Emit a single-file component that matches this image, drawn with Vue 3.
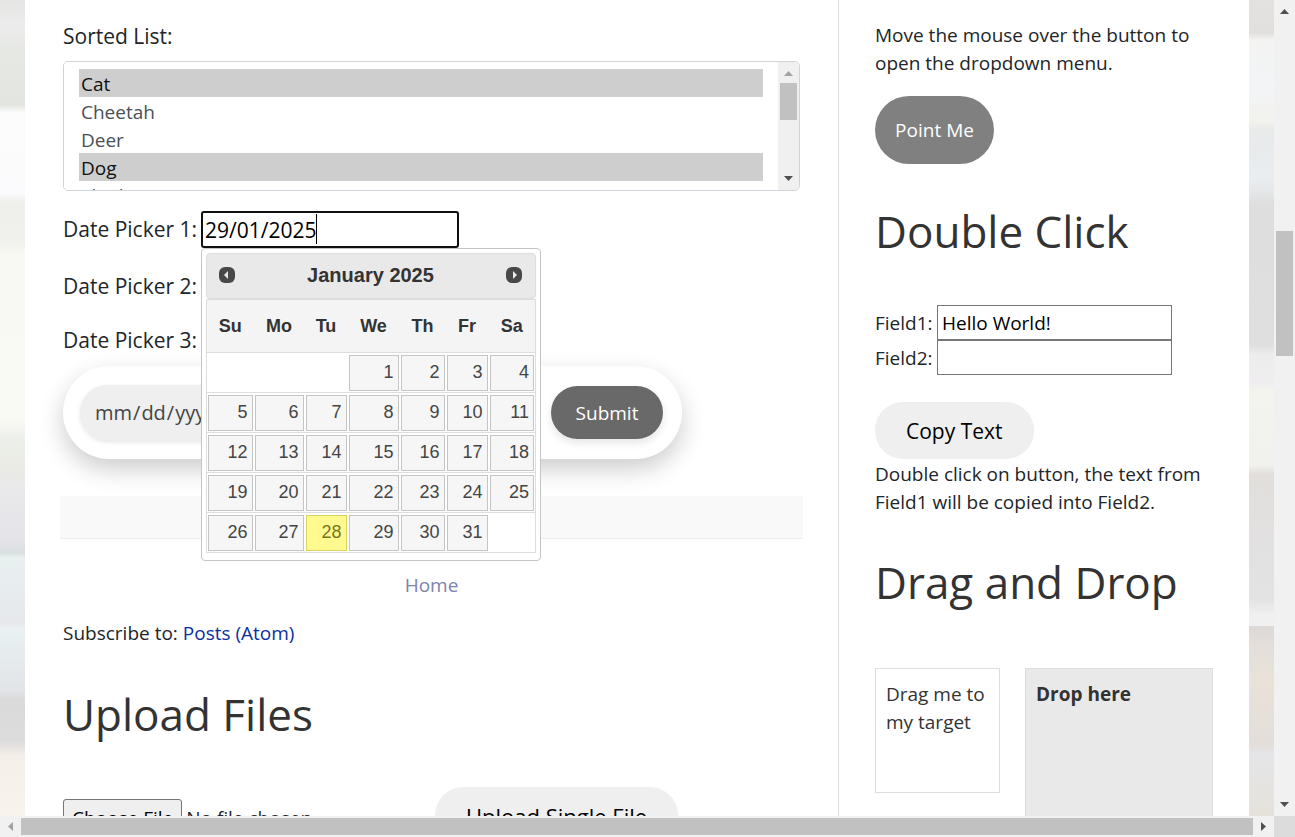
<script setup>
import { ref } from 'vue'

const animals = ['Cat', 'Cheetah', 'Deer', 'Dog', 'Elephant', 'Fox', 'Giraffe', 'Lion', 'Rabbit', 'Zebra']
const picked = ref(['Cat', 'Dog'])
const date1 = ref('29/01/2025')
const date2 = ref('')
const field1 = ref('Hello World!')
const field2 = ref('')

const weekdays = ['Su', 'Mo', 'Tu', 'We', 'Th', 'Fr', 'Sa']
const firstWeekday = 3
const daysInMonth = 31
const today = 28
const weeks = Array.from({ length: 5 }, (_, w) =>
  Array.from({ length: 7 }, (_, d) => {
    const day = w * 7 + d - firstWeekday + 1
    return day > 0 && day <= daysInMonth ? day : null
  })
)
</script>

<template>
  <div class="window">
    <div class="viewport">
      <div class="strip strip-left"></div>
      <div class="page">
        <main class="main">
          <label class="list-label" for="animals">Sorted List:</label>
          <div class="list-box">
            <select id="animals" v-model="picked" class="list" multiple>
              <option v-for="a in animals" :key="a" :value="a">{{ a }}</option>
            </select>
            <div class="list-bar">
              <svg width="9" height="5" viewBox="0 0 9 5"><path d="M0 5 4.500 0 9 5z" fill="#a3a3a3" /></svg>
              <span class="list-thumb"></span>
              <svg width="9" height="5" viewBox="0 0 9 5"><path d="M0 0 4.500 5 9 0z" fill="#505050" /></svg>
            </div>
          </div>

          <div class="date-row">
            <label for="d1">Date Picker 1:</label>
            <div class="date-wrap">
              <input id="d1" v-model="date1" class="date-input" type="text" />
              <span class="caret-line"><span class="caret-text">{{ date1 }}</span></span>
              <section class="calendar">
                <header class="cal-head">
                  <button class="cal-nav" type="button" aria-label="Prev">
                    <svg width="16" height="16" viewBox="0 0 16 16">
                      <rect width="16" height="16" rx="6" fill="#484848" />
                      <path d="M9 4v8L5 8z" fill="#e9e9e9" />
                    </svg>
                  </button>
                  <span class="cal-title">January 2025</span>
                  <button class="cal-nav" type="button" aria-label="Next">
                    <svg width="16" height="16" viewBox="0 0 16 16">
                      <rect width="16" height="16" rx="6" fill="#484848" />
                      <path d="M7 4v8l4-4z" fill="#e9e9e9" />
                    </svg>
                  </button>
                </header>
                <table class="cal-table">
                  <thead>
                    <tr>
                      <th v-for="d in weekdays" :key="d" scope="col">{{ d }}</th>
                    </tr>
                  </thead>
                  <tbody>
                    <tr v-for="(week, w) in weeks" :key="w">
                      <td v-for="(day, i) in week" :key="i">
                        <a v-if="day" href="#" :class="{ today: day === today }">{{ day }}</a>
                      </td>
                    </tr>
                  </tbody>
                </table>
              </section>
            </div>
          </div>
          <div class="date-row second">
            <label for="d2">Date Picker 2:</label>
            <input id="d2" v-model="date2" class="date-plain" type="text" />
          </div>
          <p class="date-row third">Date Picker 3:</p>

          <form class="range" @submit.prevent>
            <input class="range-input" type="date" aria-label="Start date" />
            <input class="range-input" type="date" aria-label="End date" />
            <button class="range-submit" type="submit">Submit</button>
          </form>

          <div class="band"></div>
          <a class="home" href="#">Home</a>
          <p class="subscribe">Subscribe to: <a href="#">Posts (Atom)</a></p>

          <h2 class="heading upload-heading">Upload Files</h2>
          <div class="upload-row">
            <input class="file" type="file" aria-label="Single file" />
            <button class="soft-button upload" type="button">Upload Single File</button>
          </div>
        </main>

        <aside class="side">
          <p>Move the mouse over the button to open the dropdown menu.</p>
          <button class="point" type="button">Point Me</button>

          <h2 class="heading double-heading">Double Click</h2>
          <div class="field">
            <label for="f1">Field1:</label>
            <input id="f1" v-model="field1" type="text" />
          </div>
          <div class="field">
            <label for="f2">Field2:</label>
            <input id="f2" v-model="field2" type="text" />
          </div>
          <button class="soft-button copy" type="button" @dblclick="field2 = field1">Copy Text</button>
          <p>Double click on button, the text from Field1 will be copied into Field2.</p>

          <h2 class="heading drag-heading">Drag and Drop</h2>
          <div class="drag-row">
            <div class="drag">Drag me to my target</div>
            <div class="drop">Drop here</div>
          </div>
        </aside>
      </div>
      <div class="strip strip-right"></div>
    </div>

    <div class="vbar">
      <svg width="9" height="5" viewBox="0 0 9 5"><path d="M0 5 4.500 0 9 5z" fill="#505050" /></svg>
      <span class="vtrack"><span class="vthumb"></span></span>
      <svg width="9" height="5" viewBox="0 0 9 5"><path d="M0 0 4.500 5 9 0z" fill="#505050" /></svg>
    </div>
    <div class="hbar">
      <svg width="5" height="9" viewBox="0 0 5 9"><path d="M5 0 0 4.500 5 9z" fill="#a3a3a3" /></svg>
      <span class="hthumb"></span>
      <svg width="5" height="9" viewBox="0 0 5 9"><path d="M0 0 5 4.500 0 9z" fill="#505050" /></svg>
    </div>
    <div class="corner"></div>
  </div>
</template>

<style>
body {
  margin: 0;
  overflow: hidden;
}
</style>

<style scoped>
* {
  box-sizing: border-box;
}
.window {
  display: grid;
  grid-template: minmax(0, 1fr) 21px / minmax(0, 1fr) 21px;
  height: 100vh;
  font-family: "Open Sans", "Noto Sans", sans-serif;
  font-size: 19px;
  line-height: 28px;
  color: #212529;
}
p,
h2 {
  margin: 0;
}
a {
  text-decoration: none;
}
button,
input,
select {
  font-family: inherit;
  margin: 0;
}
.viewport {
  display: flex;
  overflow: hidden;
  background: #fff;
}
.strip {
  flex: 0 0 25px;
}
.strip-left {
  background: linear-gradient(#e5e5e4 0, #ececec 25px, #e6e8e4 50px, #e3e6e0 105px, #fcfcfc 113px, #fbfbfd 193px, #efefeb 202px, #f0f0ec 240px, #f8f9f2 255px, #fafaf5 420px, #edefea 438px, #e9ebe4 468px, #e9e9ec 490px, #e4e4e8 540px, #d9dfdf 553px, #e9f0f0 558px, #e6e8ec 624px, #e9f1f2 628px, #e2e4e8 690px, #dadadb 700px, #dcdcdc 740px, #f4efe9 757px, #f8f4ed 816px);
}
.strip-right {
  background: linear-gradient(#e4e2e0 0, #e2e0de 33px, #f3f3f2 40px, #f2f4f6 90px, #f2f2ed 122px, #e8eaea 130px, #e9edf0 180px, #dedede 205px, #dfdfdf 345px, #ededee 355px, #efedef 382px, #f4f4ef 390px, #f1f1ed 465px, #e1dedb 475px, #e2e0df 510px, #e3e3e4 600px, #f0f0f1 615px, #f0f0f1 626px, #dcd8d5 626px, #e4dedb 645px, #e9e2d9 680px, #e4deda 745px, #e5e5e8 755px, #e5e2da 816px);
}
.page {
  flex: 1;
  min-width: 0;
  display: grid;
  grid-template-columns: minmax(0, 1fr) 411px;
}
.main {
  padding: 20px 38px 0;
}
.side {
  border-left: 1px solid #ddd;
  padding: 21px 36px 0;
}

.list-label {
  display: block;
  font-size: 21px;
  line-height: 32px;
}
.list-box {
  display: flex;
  height: 130px;
  margin-top: 9px;
  border: 1px solid #ced4da;
  border-radius: 5px;
  overflow: hidden;
}
.list {
  flex: 1;
  min-width: 0;
  border: 0;
  outline: 0;
  padding: 7px 15px;
  font-size: 19px;
  color: #495057;
  background: #fff;
  overflow: hidden;
  scrollbar-width: none;
}
.list option {
  height: 28px;
  padding: 2px 2px 0;
}
.list option:checked {
  color: #101010;
  background: #cecece linear-gradient(#cecece, #cecece);
}
.list-bar {
  flex: 0 0 21px;
  display: flex;
  flex-direction: column;
  align-items: center;
  padding: 9px 0;
  background: #f0f0f0;
}
.list-thumb {
  width: 17px;
  height: 37px;
  margin: 7px 0 auto;
  background: #c1c1c1;
}

.date-row {
  display: flex;
  align-items: center;
  gap: 6px;
  font-size: 21px;
  line-height: 37px;
  margin-top: 20px;
}
.date-row label {
  width: 132px;
  white-space: nowrap;
}
.third {
  margin-top: 17px;
}
.date-wrap {
  position: relative;
}
.date-input {
  display: block;
  width: 258px;
  height: 37px;
  border: 2px solid #101010;
  border-radius: 3px;
  outline: 0;
  padding: 0 2px;
  font-size: 21px;
  color: #000;
  background: #fff;
}
.caret-line {
  position: absolute;
  left: 4px;
  top: 3px;
  height: 30px;
  border-right: 1px solid #000;
  pointer-events: none;
}
.caret-text {
  visibility: hidden;
}
.date-plain {
  width: 258px;
  height: 37px;
  border: 1px solid #767676;
  font-size: 21px;
}

.calendar {
  position: absolute;
  z-index: 2;
  left: 0;
  top: 100%;
  width: 340px;
  padding: 4px 4px 7px;
  border: 1px solid #c5c5c5;
  border-radius: 4px;
  background: #fff;
  font-family: "Liberation Sans", Arial, sans-serif;
}
.cal-head {
  display: flex;
  align-items: center;
  justify-content: space-between;
  height: 46px;
  padding: 0 13px 2px 12px;
  border: 1px solid #ddd;
  border-radius: 4px;
  background: #e9e9e9;
  color: #333;
}
.cal-title {
  font-size: 20px;
  font-weight: 700;
  line-height: 36px;
}
.cal-nav {
  display: flex;
  padding: 0;
  border: 0;
  background: none;
}
.cal-table {
  width: 100%;
  table-layout: fixed;
  border-collapse: collapse;
  border: 1px solid #ddd;
  font-size: 18px;
}
.cal-table th {
  height: 53px;
  padding: 0;
  background: #f4f4f4;
  color: #333;
}
.cal-table th:nth-child(1) { width: 47px; }
.cal-table th:nth-child(2) { width: 51px; }
.cal-table th:nth-child(3) { width: 43px; }
.cal-table th:nth-child(4) { width: 52px; }
.cal-table th:nth-child(5) { width: 46px; }
.cal-table th:nth-child(6) { width: 43px; }
.cal-table tbody tr {
  border-top: 1px solid #ddd;
}
.cal-table td {
  height: 40px;
  padding: 1px;
}
.cal-table a {
  display: block;
  height: 36px;
  padding: 0 4px;
  border: 1px solid #c5c5c5;
  background: #f6f6f6;
  color: #454545;
  line-height: 32px;
  text-align: right;
}
.cal-table a.today {
  border-color: #dad55e;
  background: #fffa90;
  color: #777620;
}

.range {
  display: flex;
  align-items: center;
  gap: 16px;
  width: 619px;
  height: 93px;
  margin-top: 7px;
  padding: 0 19px 0 17px;
  border-radius: 47px;
  background: #fff;
  box-shadow: 0 10px 25px rgba(0, 0, 0, 0.2);
}
.range-input {
  flex: 1;
  min-width: 0;
  height: 55px;
  padding: 0 14px;
  border: 0;
  border-radius: 28px;
  background: #efefef;
  box-shadow: 0 2px 5px rgba(0, 0, 0, 0.1);
  color: #444;
  font-size: 20px;
}
.range-submit {
  width: 112px;
  height: 53px;
  padding: 0;
  border: 0;
  border-radius: 27px;
  background: #696969;
  box-shadow: 0 4px 8px rgba(0, 0, 0, 0.1);
  color: #fff;
  font-size: 19px;
}
.band {
  height: 43px;
  margin: 37px -3px 0;
  border-bottom: 1px solid #eee;
  background: #f9f9f9;
}
.home {
  display: block;
  margin-top: 32px;
  text-align: center;
  color: #7d83ad;
}
.subscribe {
  margin-top: 20px;
}
.subscribe a {
  color: #0a2f9e;
}
.heading {
  font-size: 44px;
  font-weight: 400;
  line-height: 60px;
  color: #333;
  white-space: nowrap;
}
.upload-heading {
  margin-top: 37px;
}
.upload-row {
  display: flex;
  align-items: flex-start;
  margin-top: 43px;
}
.file {
  width: 372px;
  margin-top: 12px;
  font-size: 19px;
  color: #212529;
}
.file::file-selector-button {
  height: 37px;
  padding: 0 8px;
  border: 1px solid #767676;
  border-radius: 3px;
  background: #efefef;
  color: #000;
  font: inherit;
}
.soft-button {
  height: 57px;
  padding: 0 31px;
  border: 0;
  border-radius: 28px;
  background: #efefef;
  color: #000;
  font-size: 21px;
  white-space: nowrap;
}
.upload {
  font-size: 22px;
}

.point {
  display: block;
  width: 119px;
  height: 68px;
  margin-top: 19px;
  padding: 0;
  border: 0;
  border-radius: 34px;
  background: #808080;
  color: #fff;
  font-size: 19px;
}
.double-heading {
  margin-top: 37px;
}
.field {
  display: flex;
  align-items: center;
}
.double-heading + .field {
  margin-top: 44px;
}
.field label {
  width: 62px;
}
.field input {
  width: 235px;
  height: 35px;
  padding: 0 4px;
  border: 1px solid #767676;
  background: #fff;
  color: #000;
  font-size: 19px;
}
.copy {
  display: block;
  margin: 27px 0 1px;
}
.drag-heading {
  margin-top: 36px;
}
.drag-row {
  display: flex;
  gap: 25px;
  margin-top: 56px;
  color: #333;
}
.drag {
  width: 125px;
  height: 125px;
  padding: 11px 10px;
  border: 1px solid #ddd;
  background: #fff;
}
.drop {
  flex: 1;
  height: 188px;
  padding: 11px 10px;
  border: 1px solid #ddd;
  background: #e9e9e9;
  font-weight: 700;
}

.vbar {
  display: flex;
  flex-direction: column;
  align-items: center;
  padding: 9px 0;
  background: #f1f1f1;
}
.vtrack {
  flex: 1;
  width: 17px;
  padding-top: 217px;
}
.vthumb {
  display: block;
  height: 125px;
  background: #c1c1c1;
}
.hbar {
  display: flex;
  align-items: center;
  gap: 8px;
  padding: 0 8px;
  background: #f1f1f1;
}
.hthumb {
  flex: 1;
  height: 17px;
  background: #c1c1c1;
}
.corner {
  background: #dcdcdc;
}
</style>
